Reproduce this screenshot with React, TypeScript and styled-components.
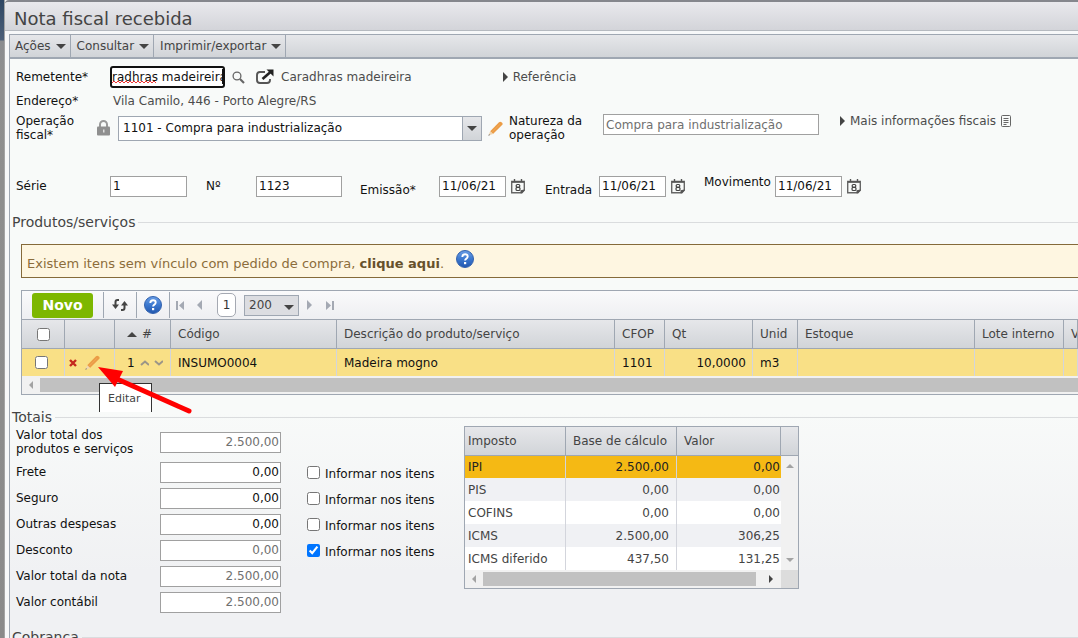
import React from "react";
import styled, { createGlobalStyle } from "styled-components";

const line = "#9fa7b2";
const inputLine = "#a0a0a0";
const bar = "linear-gradient(#e6e7ea, #d1d4d8)";

const GlobalStyle = createGlobalStyle`
  * { box-sizing: border-box; }
  html, body { margin: 0; }
  body {
    overflow: hidden;
    background: #f1f2f4;
    color: #111;
    font: 12px/16px "DejaVu Sans", Verdana, sans-serif;
  }
  input, select, button { font: inherit; color: inherit; margin: 0; }
`;

const Page = styled.div`
  display: grid;
  grid-template-columns: 5px minmax(0, 1fr);
  height: 100vh;
  overflow: hidden;
`;

const Backdrop = styled.div`
  background: linear-gradient(#2f4763 0, #4d6079 40px, #8b8d90 41px, #8f8f8f 78px, #8a8a8a 100%);
  border-right: 1px solid #a4a4a4;
`;

const Dialog = styled.main`
  display: flex;
  flex-direction: column;
  min-width: 0;
  background: #f7f8f9;
  border-top: 2px solid #85878d;
  border-top-left-radius: 4px;
`;

const TitleBar = styled.header`
  height: 29px;
  padding: 5px 9px 0;
  background: linear-gradient(#e9e9ed, #d3d4d9);
  border-bottom: 1px solid #b6bac0;
  border-top-left-radius: 4px;
`;

const Title = styled.h1`
  margin: 0;
  font-size: 18px;
  line-height: 24px;
  font-weight: 400;
  color: #444;
`;

const Panel = styled.div`
  flex: 1;
  margin: 3px 0 0 4px;
  border-left: 1px solid ${line};
  background: linear-gradient(#f8faf9 0, #f8faf9 62%, #f0f1f3 88%);
`;

const MenuBar = styled.nav`
  display: flex;
  height: 25px;
  background: ${bar};
  border-top: 1px solid ${line};
  border-bottom: 2px solid ${line};
`;

const MenuButton = styled.button`
  display: flex;
  align-items: center;
  gap: 5px;
  padding: 0 4px 0 6px;
  border: 0;
  border-right: 1px solid ${line};
  background: none;
  color: #444;
  &:first-child { padding-left: 5px; }
`;

const Form = styled.form`
  padding: 6px 0 0 6px;
`;

const Row = styled.div<{ $h: number; $gap?: number }>`
  display: flex;
  align-items: center;
  height: ${p => p.$h}px;
  margin-bottom: ${p => p.$gap || 0}px;
`;

const Label = styled.label<{ $w?: number; $align?: string; $left?: number }>`
  flex: none;
  width: ${p => (p.$w ? p.$w + "px" : "auto")};
  margin-left: ${p => p.$left || 0}px;
  align-self: ${p => p.$align || "center"};
  line-height: 14px;
`;

const Muted = styled.span<{ $left?: number }>`
  margin-left: ${p => p.$left || 0}px;
  color: #4c4c4c;
  white-space: nowrap;
`;

const TextBox = styled.input<{ $w: number; $right?: boolean; $dim?: boolean; $top?: boolean }>`
  flex: none;
  width: ${p => p.$w}px;
  height: 21px;
  padding: 0 ${p => (p.$right ? 1 : 2)}px;
  border: 1px solid ${inputLine};
  border-radius: 0;
  background: #fff;
  color: ${p => (p.$dim ? "#707070" : "#111")};
  text-align: ${p => (p.$right ? "right" : "left")};
  align-self: ${p => (p.$top ? "flex-start" : "center")};
  outline: 0;
`;

const FocusBox = styled.span`
  position: relative;
  flex: none;
  display: block;
  width: 115px;
  height: 22px;
  border: 2px solid #111;
  border-radius: 3px;
  background: #fff;
  overflow: hidden;
  input {
    display: block;
    width: 100%;
    height: 18px;
    padding: 0;
    border: 0;
    outline: 0;
    background: none;
  }
  svg { position: absolute; left: 0; bottom: 2px; }
`;

const Caret = styled.i`
  position: absolute;
  right: 0;
  top: 1px;
  width: 1px;
  height: 15px;
  background: #111;
`;

const IconButton = styled.button<{ $left?: number }>`
  flex: none;
  display: flex;
  padding: 0;
  margin-left: ${p => p.$left || 0}px;
  border: 0;
  background: none;
`;

const Disclosure = styled.button<{ $left: number; $top?: boolean }>`
  display: flex;
  align-items: center;
  align-self: ${p => (p.$top ? "flex-start" : "center")};
  gap: 5px;
  margin-left: ${p => p.$left}px;
  padding: 0;
  border: 0;
  background: none;
  color: #4c4c4c;
  line-height: 14px;
  white-space: nowrap;
  text-align: left;
  svg { flex: none; }
`;

const Combo = styled.span`
  display: flex;
  flex: none;
  position: relative;
  width: 364px;
  height: 25px;
  margin-left: 8px;
  select {
    width: 100%;
    padding: 0 20px 0 4px;
    border: 1px solid ${line};
    border-radius: 0;
    background: #fff;
    appearance: none;
  }
`;

const ComboArrow = styled.span`
  position: absolute;
  inset: 1px 1px 1px auto;
  display: flex;
  align-items: center;
  justify-content: center;
  width: 19px;
  border-left: 1px solid ${line};
  background: ${bar};
  pointer-events: none;
`;

const SectionTitle = styled.h2<{ $top?: boolean }>`
  display: flex;
  align-items: center;
  gap: 3px;
  margin: ${p => (p.$top ? 14 : 0)}px 0 0;
  padding-left: 2px;
  font-size: 14px;
  line-height: 16px;
  font-weight: 400;
  color: #444;
  &::after {
    content: "";
    flex: 1;
    height: 1px;
    background: #dadcde;
  }
`;

const Notice = styled.p`
  display: flex;
  align-items: center;
  height: 34px;
  margin: 14px 0 12px 11px;
  padding: 6px 6px 0 5px;
  border: 1px solid #856a3a;
  border-right: 0;
  background: #fef6e1;
  color: #8c6d3b;
  font-size: 13px;
  white-space: pre;
  a { color: #66512c; font-weight: 700; text-decoration: none; }
  svg { margin: -10px 0 0 12px; }
`;

const GridBox = styled.section`
  position: relative;
  margin-left: 11px;
  border: 1px solid ${line};
  border-right: 0;
`;

const GridTools = styled.div`
  display: flex;
  align-items: center;
  height: 28px;
  background: linear-gradient(#fafafb, #eeeff2);
`;

const NewButton = styled.button`
  width: 61px;
  height: 25px;
  margin: 0 10px 0 10px;
  padding: 0;
  border: 0;
  border-radius: 3px;
  background: #7db700;
  color: #fff;
  font-size: 14px;
  font-weight: 700;
`;

const ToolCell = styled.button`
  display: flex;
  align-items: center;
  justify-content: center;
  width: 33px;
  height: 26px;
  padding: 0;
  border: 0;
  border-left: 1px solid ${line};
  background: none;
`;

const Pager = styled.div`
  display: flex;
  align-items: center;
  height: 26px;
  padding-left: 6px;
  border-left: 1px solid ${line};
`;

const PageNumber = styled.button`
  width: 19px;
  height: 24px;
  margin: 0 8px 0 15px;
  padding: 0;
  border: 1px solid #a5a9b2;
  border-radius: 5px;
  background: #fff;
  color: #333;
`;

const PageSize = styled.span`
  position: relative;
  width: 55px;
  height: 21px;
  margin-right: 8px;
  select {
    display: block;
    width: 100%;
    height: 100%;
    padding: 0 0 0 4px;
    border: 1px solid ${line};
    border-radius: 0;
    background: #dcdde1;
    color: #444;
    appearance: none;
  }
  svg { position: absolute; right: 5px; top: 10px; pointer-events: none; }
`;

const ItemTable = styled.table`
  width: 100%;
  table-layout: fixed;
  border-collapse: separate;
  border-spacing: 0;
  th {
    height: 30px;
    padding: 0 7px;
    border: solid ${line};
    border-width: 1px 1px 1px 0;
    background: ${bar};
    color: #444;
    font-weight: 400;
    text-align: left;
    white-space: nowrap;
    overflow: hidden;
  }
  td {
    height: 27px;
    padding: 0 7px;
    border-right: 1px solid #d3d5dc;
    background: #f9e086;
    white-space: nowrap;
  }
  td.num { text-align: right; padding-right: 6px; }
  th:first-child, td:first-child { padding: 0 0 0 15px; }
  td:first-child { padding-left: 13px; }
`;

const Actions = styled.span<{ $gap: number }>`
  display: flex;
  align-items: center;
  gap: ${p => p.$gap}px;
`;

const Check = styled.input`
  display: block;
  flex: none;
  width: 13px;
  height: 13px;
`;

const HScroll = styled.div<{ $end?: boolean }>`
  display: flex;
  align-items: center;
  gap: 7px;
  height: 18px;
  padding: 0 ${p => (p.$end ? 8 : 0)}px 0 7px;
  background: #f1f1f1;
  i { flex: 1; height: 14px; background: #c1c1c1; }
  svg:last-child { margin-left: 6px; }
`;

const Tooltip = styled.div`
  position: absolute;
  left: 77px;
  top: 92px;
  width: 53px;
  height: 29px;
  padding: 7px 0 0 8px;
  border: 1px solid #333;
  border-bottom: 0;
  background: #fff;
  color: #444;
  font-size: 11px;
`;

const Pointer = styled.svg`
  position: absolute;
  left: 75px;
  top: 74px;
`;

const Totals = styled.div`
  display: grid;
  grid-template-columns: 448px 335px;
  align-items: start;
  margin-left: 6px;
`;

const TotalRow = styled.div<{ $tall?: boolean }>`
  display: grid;
  grid-template-columns: 144px 121px auto;
  align-items: center;
  height: ${p => (p.$tall ? 34 : 26)}px;
  > label { line-height: 14px; }
`;

const CheckLabel = styled.label`
  display: flex;
  align-items: center;
  gap: 5px;
  padding-left: 26px;
  span { padding-top: 3px; }
`;

const TaxBox = styled.section`
  display: grid;
  grid-template-columns: minmax(0, 1fr) 17px;
  margin-top: 1px;
  border: 1px solid ${line};
`;

const TaxTable = styled.table`
  width: 100%;
  table-layout: fixed;
  border-collapse: separate;
  border-spacing: 0;
  color: #444;
  th {
    height: 29px;
    padding: 0 7px;
    border-right: 1px solid ${line};
    border-bottom: 1px solid ${line};
    background: ${bar};
    font-weight: 400;
    text-align: left;
    white-space: nowrap;
  }
  th:first-child, td:first-child { padding-left: 3px; text-align: left; }
  td {
    height: 23px;
    padding: 0 7px;
    border-right: 1px solid #d3d5dc;
    background: #fff;
    text-align: right;
  }
  td:last-child { border: 0; padding-right: 1px; }
  tbody tr:nth-child(even) td { background: #f0f1f4; }
  tbody tr:first-child td { height: 22px; background: #f5b914; color: #222; }
`;

const Rail = styled.div`
  display: flex;
  flex-direction: column;
  background: #f1f1f1;
  b { height: 29px; background: ${bar}; border-bottom: 1px solid ${line}; }
  div {
    flex: 1;
    display: flex;
    flex-direction: column;
    align-items: center;
    justify-content: space-between;
    padding: 8px 0;
  }
`;

const Corner = styled.div`
  background: #dcdcdc;
`;

const Tri = ({ dir, size = 5, color = "#444" }: { dir: string; size?: number; color?: string }) => {
  const s = size;
  const shapes: Record<string, [number, number, string]> = {
    down: [2 * s, s, `0,0 ${2 * s},0 ${s},${s}`],
    up: [2 * s, s, `0,${s} ${2 * s},${s} ${s},0`],
    right: [s, 2 * s, `0,0 ${s},${s} 0,${2 * s}`],
    left: [s, 2 * s, `${s},0 0,${s} ${s},${2 * s}`],
  };
  const [w, h, points] = shapes[dir];
  return (
    <svg width={w} height={h} aria-hidden>
      <polygon points={points} fill={color} />
    </svg>
  );
};

const Jump = ({ end }: { end?: boolean }) => (
  <svg width="8" height="9" aria-hidden>
    {end ? (
      <path d="M0 0 5 4.5 0 9ZM6 0h2v9H6z" fill="#a4a9b3" />
    ) : (
      <path d="M8 0 3 4.5 8 9ZM0 0h2v9H0z" fill="#a4a9b3" />
    )}
  </svg>
);

const Pencil = () => (
  <svg width="15" height="15" viewBox="0 0 15 15" aria-hidden>
    <path d="M2.2 10.3 11 1.2q1.200-1 2.500 0l.6.6q1 1.100 0 2.300L5 13Z" fill="#eb9c46" />
    <path d="m4 11.200 8-8" stroke="#f0a858" strokeWidth="1" />
    <path d="M2.200 10.300 5 13 .5 14.600Z" fill="#f0d5b0" />
    <path d="m1 13.200 1 .9-1.600.6Z" fill="#555" />
  </svg>
);

const Calendar = () => (
  <svg width="14" height="15" viewBox="0 0 14 15" fill="none" stroke="#666" aria-hidden>
    <path d="M.7 2.500h12.600v8.800l-2.500 2.500H.7Z" strokeWidth="1.400" />
    <path d="M1 3h12" stroke="#555" strokeWidth="1.600" />
    <path d="M3.500 0v3M10.500 0v3" stroke="#555" strokeWidth="1.400" />
    <path d="M13.500 10.500v1L11 14.200h-1.500v-3Z" fill="#555" stroke="none" />
    <rect x="5.200" y="5.500" width="3.600" height="2.800" rx="1.200" stroke="#444" strokeWidth="1.200" />
    <rect x="5" y="8.300" width="4" height="3.200" rx="1.300" stroke="#444" strokeWidth="1.200" />
  </svg>
);

const Help = () => (
  <svg width="18" height="18" viewBox="0 0 18 18" aria-hidden>
    <defs>
      <linearGradient id="help" x2="0" y2="1">
        <stop offset="0" stopColor="#6a9ee6" />
        <stop offset="0.500" stopColor="#3c78cf" />
        <stop offset="1" stopColor="#2257ae" />
      </linearGradient>
    </defs>
    <circle cx="9" cy="9" r="8.500" fill="url(#help)" stroke="#3463ae" />
    <path d="M6.300 7q.1-2.700 2.800-2.700 2.600 0 2.600 2.300 0 1.200-1.300 2-1.300.8-1.300 2" fill="none" stroke="#fff" strokeWidth="1.900" />
    <rect x="8" y="12" width="2.200" height="2.200" fill="#fff" />
  </svg>
);

const Chevron = ({ up }: { up?: boolean }) => (
  <svg width="10" height="6" fill="none" stroke="#9b9588" strokeWidth="2" aria-hidden>
    <path d={up ? "M1 5 5 1.500 9 5" : "M1 1 5 4.500 9 1"} />
  </svg>
);

const taxes = [
  ["IPI", "2.500,00", "0,00"],
  ["PIS", "0,00", "0,00"],
  ["COFINS", "0,00", "0,00"],
  ["ICMS", "2.500,00", "306,25"],
  ["ICMS diferido", "437,50", "131,25"],
];

const totals = [
  { id: "produtos", label: <>Valor total dos<br />produtos e serviços</>, value: "2.500,00", dim: true, tall: true },
  { id: "frete", label: "Frete", value: "0,00", check: true },
  { id: "seguro", label: "Seguro", value: "0,00", check: true },
  { id: "outras", label: "Outras despesas", value: "0,00", check: true },
  { id: "desconto", label: "Desconto", value: "0,00", dim: true, check: true, checked: true },
  { id: "nota", label: "Valor total da nota", value: "2.500,00", dim: true },
  { id: "contabil", label: "Valor contábil", value: "2.500,00", dim: true },
];

const columns = [43, 50, 56, 166, 278, 50, 88, 45, 177, 89];

export default function App() {
  return (
    <Page>
      <GlobalStyle />
      <Backdrop />
      <Dialog>
        <TitleBar>
          <Title>Nota fiscal recebida</Title>
        </TitleBar>
        <Panel>
          <MenuBar>
            {["Ações", "Consultar", "Imprimir/exportar"].map(m => (
              <MenuButton key={m} type="button">
                {m} <Tri dir="down" />
              </MenuButton>
            ))}
          </MenuBar>

          <Form onSubmit={e => e.preventDefault()}>
            <Row $h={24} $gap={2}>
              <Label $w={94} htmlFor="remetente">Remetente*</Label>
              <FocusBox>
                <input id="remetente" defaultValue="radhras madeireira" spellCheck={false} />
                <svg width="44" height="3" fill="none" stroke="#e33" aria-hidden>
                  <path d={"M0 2" + "l2-2 2 2".repeat(11)} />
                </svg>
                <Caret />
              </FocusBox>
              <IconButton $left={7} type="button" aria-label="Pesquisar">
                <svg width="13" height="13" fill="none" stroke="#666" aria-hidden>
                  <circle cx="5" cy="5" r="3.900" strokeWidth="1.300" />
                  <path d="m8 8 4 4" strokeWidth="2.200" />
                </svg>
              </IconButton>
              <IconButton $left={11} type="button" aria-label="Abrir cadastro">
                <svg width="18" height="16" fill="none" stroke="#222" aria-hidden>
                  <path d="M9 3H4Q1 3 1 6v5q0 3 3 3h7q3 0 3-3v-1" stroke="#555" strokeWidth="1.900" />
                  <path d="m6.500 10 8-7" strokeWidth="2.600" />
                  <path d="M10.500.5h7v7Z" fill="#222" stroke="none" />
                </svg>
              </IconButton>
              <Muted $left={7}>Caradhras madeireira</Muted>
              <Disclosure $left={91} type="button">
                <Tri dir="right" /> Referência
              </Disclosure>
            </Row>

            <Row $h={19} $gap={4}>
              <Label $w={97}>Endereço*</Label>
              <Muted>Vila Camilo, 446 - Porto Alegre/RS</Muted>
            </Row>

            <Row $h={28} $gap={33}>
              <Label $w={81} htmlFor="operacao">Operação<br />fiscal*</Label>
              <svg width="13" height="16" viewBox="0 0 13 16" aria-hidden>
                <path d="M3 7V4.500a3.500 3.500 0 0 1 7 0V7" fill="none" stroke="#999" strokeWidth="2" />
                <rect y="6.500" width="13" height="9" rx="1" fill="#8f8f8f" />
                <path d="M6 9.500h1.500v3H6z" fill="#ddd" />
              </svg>
              <Combo>
                <select id="operacao">
                  <option>1101 - Compra para industrialização</option>
                </select>
                <ComboArrow><Tri dir="down" /></ComboArrow>
              </Combo>
              <IconButton $left={6} type="button" aria-label="Editar operação">
                <Pencil />
              </IconButton>
              <Label $left={6} $w={94} $align="flex-start" htmlFor="natureza">Natureza da<br />operação</Label>
              <TextBox id="natureza" $w={216} $dim $top defaultValue="Compra para industrialização" />
              <Disclosure $left={21} $top type="button">
                <Tri dir="right" /> Mais informações fiscais
                <svg width="11" height="12" fill="none" stroke="#666" aria-hidden>
                  <rect x=".5" y=".5" width="9" height="11" rx="1" />
                  <path d="M2.500 3.500h5M2.500 5.500h5M2.500 7.500h5M2.500 9.500h3" />
                </svg>
              </Disclosure>
            </Row>

            <Row $h={22} $gap={17}>
              <Label $w={94} htmlFor="serie">Série</Label>
              <TextBox id="serie" $w={77} defaultValue="1" />
              <Label $left={19} $w={50} htmlFor="numero">Nº</Label>
              <TextBox id="numero" $w={86} defaultValue="1123" />
              <Label $left={18} $w={79} $align="flex-end" htmlFor="emissao">Emissão*</Label>
              <TextBox id="emissao" $w={67} defaultValue="11/06/21" />
              <IconButton $left={5} type="button" aria-label="Calendário"><Calendar /></IconButton>
              <Label $left={20} $w={54} $align="flex-end" htmlFor="entrada">Entrada</Label>
              <TextBox id="entrada" $w={67} defaultValue="11/06/21" />
              <IconButton $left={5} type="button" aria-label="Calendário"><Calendar /></IconButton>
              <Label $left={19} $w={71} $align="flex-start" htmlFor="movimento">Movimento</Label>
              <TextBox id="movimento" $w={67} defaultValue="11/06/21" />
              <IconButton $left={5} type="button" aria-label="Calendário"><Calendar /></IconButton>
            </Row>
          </Form>

          <SectionTitle>Produtos/serviços</SectionTitle>
          <Notice>
            Existem itens sem vínculo com pedido de compra, <a href="#vincular">clique aqui</a>.
            <Help />
          </Notice>

          <GridBox>
            <GridTools>
              <NewButton type="button">Novo</NewButton>
              <ToolCell type="button" aria-label="Atualizar">
                <svg width="16" height="14" fill="none" stroke="#444" strokeWidth="2" aria-hidden>
                  <path d="M7 2H5.500Q3.500 2 3.500 4v4M9 12h1.500q2 0 2-2V6" />
                  <path d="M0 6.500h7L3.500 11ZM9 7.500h7L12.500 3Z" fill="#444" stroke="none" />
                </svg>
              </ToolCell>
              <ToolCell type="button" aria-label="Ajuda"><Help /></ToolCell>
              <Pager>
                <IconButton type="button" aria-label="Primeira"><Jump /></IconButton>
                <IconButton $left={13} type="button" aria-label="Anterior"><Tri dir="left" color="#a4a9b3" /></IconButton>
                <PageNumber type="button">1</PageNumber>
                <PageSize>
                  <select aria-label="Itens por página"><option>200</option></select>
                  <Tri dir="down" />
                </PageSize>
                <IconButton type="button" aria-label="Próxima"><Tri dir="right" color="#a4a9b3" /></IconButton>
                <IconButton $left={14} type="button" aria-label="Última"><Jump end /></IconButton>
              </Pager>
            </GridTools>
            <ItemTable>
              <colgroup>
                {columns.map((w, i) => <col key={i} width={w} />)}
                <col />
              </colgroup>
              <thead>
                <tr>
                  <th><Check type="checkbox" aria-label="Selecionar todos" /></th>
                  <th />
                  <th><Actions $gap={5}><span /><Tri dir="up" /> #</Actions></th>
                  <th>Código</th>
                  <th>Descrição do produto/serviço</th>
                  <th>CFOP</th>
                  <th>Qt</th>
                  <th>Unid</th>
                  <th>Estoque</th>
                  <th>Lote interno</th>
                  <th>V</th>
                </tr>
              </thead>
              <tbody>
                <tr>
                  <td><Check type="checkbox" aria-label="Selecionar item" /></td>
                  <td>
                    <Actions $gap={8}>
                      <IconButton $left={-3} type="button" aria-label="Excluir">
                        <svg width="8" height="8" aria-hidden>
                          <path d="m1 1 6 6M7 1 1 7" stroke="#c4281d" strokeWidth="2.400" />
                        </svg>
                      </IconButton>
                      <IconButton type="button" aria-label="Editar"><Pencil /></IconButton>
                    </Actions>
                  </td>
                  <td><Actions $gap={5}><span /><span>1</span><Chevron up /><Chevron /></Actions></td>
                  <td>INSUMO0004</td>
                  <td>Madeira mogno</td>
                  <td>1101</td>
                  <td className="num">10,0000</td>
                  <td>m3</td>
                  <td /><td /><td />
                </tr>
              </tbody>
            </ItemTable>
            <HScroll><Tri dir="left" size={4} color="#a3a3a3" /><i /></HScroll>
            <Tooltip role="tooltip">Editar</Tooltip>
            <Pointer width="96" height="50" aria-hidden>
              <path d="M20 14 92 46" stroke="#f00" strokeWidth="5" strokeLinecap="round" />
              <path d="M1 2 26 6 18 22Z" fill="#f00" />
            </Pointer>
          </GridBox>

          <SectionTitle $top>Totais</SectionTitle>
          <Totals>
            <div>
              {totals.map(t => (
                <TotalRow key={t.id} $tall={t.tall}>
                  <label htmlFor={t.id}>{t.label}</label>
                  <TextBox id={t.id} $w={121} $right $dim={t.dim} defaultValue={t.value} />
                  {t.check && (
                    <CheckLabel>
                      <Check type="checkbox" defaultChecked={t.checked} />
                      <span>Informar nos itens</span>
                    </CheckLabel>
                  )}
                </TotalRow>
              ))}
            </div>
            <TaxBox>
              <TaxTable>
                <colgroup><col width="101" /><col width="111" /><col /></colgroup>
                <thead>
                  <tr><th>Imposto</th><th>Base de cálculo</th><th>Valor</th></tr>
                </thead>
                <tbody>
                  {taxes.map(r => (
                    <tr key={r[0]}>{r.map((c, i) => <td key={i}>{c}</td>)}</tr>
                  ))}
                </tbody>
              </TaxTable>
              <Rail>
                <b />
                <div>
                  <Tri dir="up" size={4} color="#a3a3a3" />
                  <Tri dir="down" size={4} color="#a3a3a3" />
                </div>
              </Rail>
              <HScroll $end><Tri dir="left" size={4} color="#a3a3a3" /><i /><Tri dir="right" size={4} /></HScroll>
              <Corner />
            </TaxBox>
          </Totals>
          <SectionTitle $top>Cobrança</SectionTitle>
        </Panel>
      </Dialog>
    </Page>
  );
}
